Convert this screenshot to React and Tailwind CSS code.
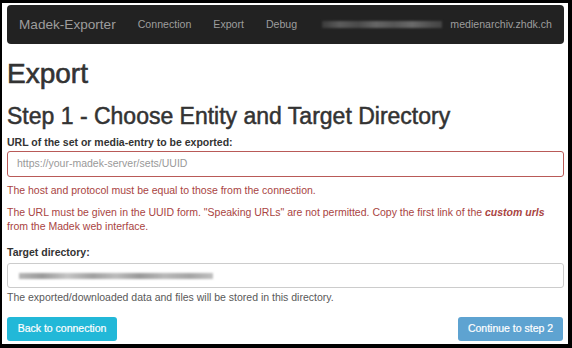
export default function App() {
  return (
    <div className="w-[572px] h-[348px] bg-black pl-[2px] pt-[3px] font-['Liberation_Sans',Arial,sans-serif]">
      <div className="w-[566px] h-[341px] bg-white pl-[5px] pr-[4px] pt-[2px] flex flex-col">
        {/* navbar */}
        <nav className="h-[39px] bg-[#222222] rounded-[4px] flex items-center px-[12px] text-[#9d9d9d]">
          <span className="text-[13.6px] leading-none">Madek-Exporter</span>
          <div className="ml-[22px] flex gap-[22px] text-[10.6px] leading-none">
            <span>Connection</span>
            <span>Export</span>
            <span>Debug</span>
          </div>
          <div className="ml-auto flex items-center gap-[8px] text-[10.6px] leading-none">
            <div className="w-[120px] h-[7px] blur-[1.2px] bg-[linear-gradient(90deg,#3a3a3a,#5c5c5c_15%,#4a4a4a_30%,#666_45%,#555_60%,#6a6a6a_75%,#505050_90%,#444)]" />
            <span>medienarchiv.zhdk.ch</span>
          </div>
        </nav>

        <h1 className="mt-[14px] text-[28px] leading-[32px] font-medium text-[#333] [-webkit-text-stroke:0.6px_#333]">
          Export
        </h1>
        <h2 className="mt-[13px] text-[23px] leading-[26px] font-medium text-[#333] [-webkit-text-stroke:0.5px_#333]">
          Step 1 - Choose Entity and Target Directory
        </h2>

        <label className="mt-[6px] text-[10.5px] leading-[15px] font-bold text-[#333]">
          URL of the set or media-entry to be exported:
        </label>
        <div className="mt-[1px] h-[26px] border border-[#b95a58] rounded-[3px] flex items-center px-[9px] text-[10.5px] text-[#999]">
          https://your-madek-server/sets/UUID
        </div>
        <p className="mt-[6px] text-[10.5px] leading-[15px] text-[#a94442]">
          The host and protocol must be equal to those from the connection.
        </p>
        <p className="mt-[7px] text-[10.5px] leading-[14px] text-[#a94442]">
          The URL must be given in the UUID form. "Speaking URLs" are not permitted. Copy the first link of the{" "}
          <b className="italic">custom urls</b> from the Madek web interface.
        </p>

        <label className="mt-[12px] text-[10.5px] leading-[15px] font-bold text-[#333]">Target directory:</label>
        <div className="mt-[3px] h-[25px] border border-[#cccccc] rounded-[3px] flex items-center px-[11px]">
          <div className="w-[194px] h-[6px] blur-[1.2px] bg-[linear-gradient(90deg,#b5b5b5,#9a9a9a_12%,#c4c4c4_25%,#a0a0a0_38%,#bcbcbc_50%,#999_62%,#b8b8b8_75%,#a5a5a5_88%,#c0c0c0)]" />
        </div>
        <p className="mt-[2px] text-[10.5px] leading-[15px] text-[#595959]">
          The exported/downloaded data and files will be stored in this directory.
        </p>

        <div className="mt-[12px] flex justify-between">
          <button className="w-[110px] h-[24px] rounded-[3px] bg-[#22b8d8] text-white text-[10.5px] [-webkit-text-stroke:0.2px_#fff]">
            Back to connection
          </button>
          <button className="w-[105px] h-[24px] rounded-[3px] bg-[#5ea3d1] text-white text-[10.5px] mr-[1px] [-webkit-text-stroke:0.2px_#fff]">
            Continue to step 2
          </button>
        </div>
      </div>
    </div>
  );
}
